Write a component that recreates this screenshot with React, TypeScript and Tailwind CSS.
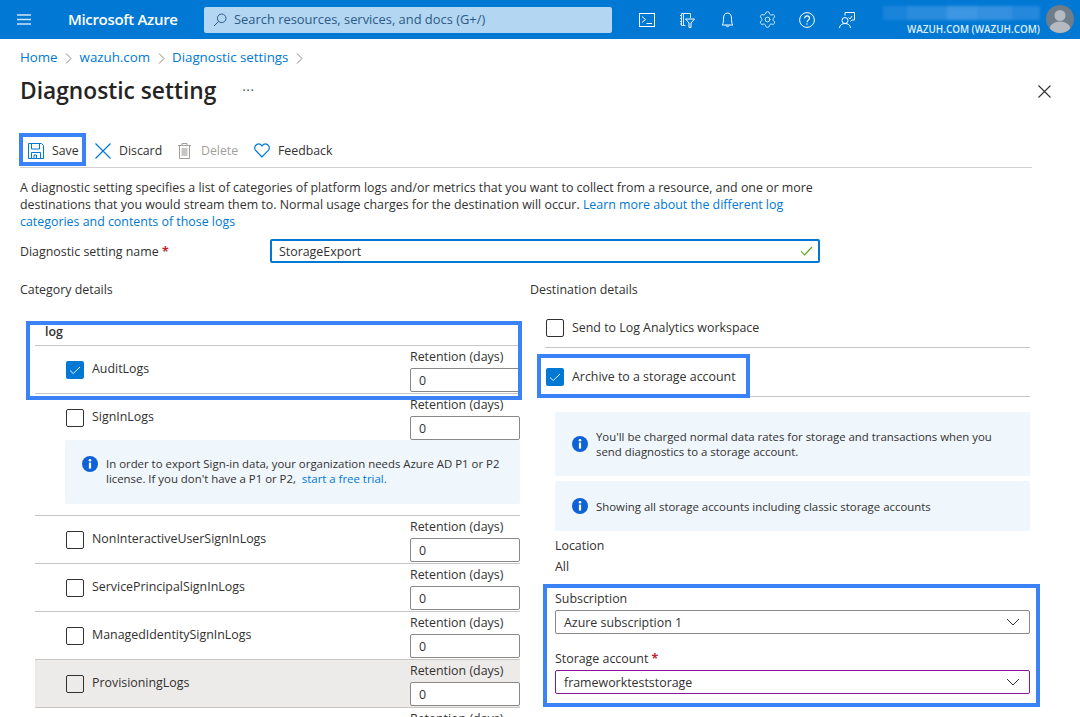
import React from "react";
import { Settings } from "lucide-react";

const Info = () => (
  <svg width="16" height="16" viewBox="0 0 16 16" className="shrink-0">
    <circle cx="8" cy="8" r="8" fill="#0f62d6" />
    <circle cx="8" cy="4.3" r="1.3" fill="#fff" />
    <rect x="6.9" y="6.6" width="2.2" height="6" fill="#fff" />
  </svg>
);

const Chevron = () => (
  <svg width="14" height="8" viewBox="0 0 14 8" fill="none" stroke="#323130" strokeWidth="1">
    <path d="M1 1l6 6 6-6" />
  </svg>
);

const Crumb = () => (
  <svg width="7" height="11" viewBox="0 0 7 11" fill="none" stroke="#8a8886" className="mx-[7.5px]">
    <path d="M1 .5l5 5-5 5" />
  </svg>
);

const Box = ({ on }: { on?: boolean }) =>
  on ? (
    <span className="w-[18px] h-[18px] rounded-[2px] bg-[#0078d4] flex items-center justify-center shrink-0">
      <svg width="12" height="12" viewBox="0 0 12 12" fill="none" stroke="#fff" strokeWidth="0.9">
        <path d="M1 6.5l3.2 3L11 3" />
      </svg>
    </span>
  ) : (
    <span className="w-[18px] h-[18px] rounded-[2px] border border-[#323130] shrink-0" />
  );

const Row = ({ name, on, grey, children }: { name: string; on?: boolean; grey?: boolean; children?: React.ReactNode }) => (
  <div className={`border-b border-[#c8c6c4] ${grey ? "bg-[#edebe9]" : ""}`}>
    <div className="h-[47px] flex">
      <div className="flex-1 flex items-center gap-2 pl-[31px]">
        <Box on={on} />
        <span>{name}</span>
      </div>
      <div className="w-[110px] pt-[1px]">
        <div className="h-[21px] leading-[20px] whitespace-nowrap">Retention (days)</div>
        <div className="h-[24px] border border-[#8a8886] rounded-[2px] bg-white pl-[8px] leading-[23px]">0</div>
      </div>
    </div>
    {children}
  </div>
);

const Blurb = ({ h, children }: { h: string; children: React.ReactNode }) => (
  <div className={`${h} bg-[#eff6fc] rounded-[2px] flex items-center pl-[17px] pr-[24px] gap-[8px] text-[11.4px]`}>
    <Info />
    <div className="leading-[15px]">{children}</div>
  </div>
);

const Select = ({ value, purple }: { value: string; purple?: boolean }) => (
  <div className={`h-[24px] rounded-[2px] border flex items-center justify-between pl-[8px] pr-[9px] ${purple ? "border-[#881798]" : "border-[#8a8886]"}`}>
    <span className="pt-[2px]">{value}</span>
    <Chevron />
  </div>
);

const Outline = ({ c }: { c: string }) => <div className={`absolute border-4 border-[#3b82f6] pointer-events-none ${c}`} />;

const Cell = ({ children }: { children: React.ReactNode }) => (
  <div className="w-[40px] h-[39px] flex items-center justify-center">{children}</div>
);

export default function App() {
  return (
    <div className="relative w-[1080px] h-[717px] overflow-hidden bg-white text-[#323130] text-[12.4px] font-['Open_Sans','Noto_Sans',sans-serif]">
      {/* top bar */}
      <header className="h-[39px] bg-[#0078d4] flex items-center text-white">
        <svg width="14" height="11" viewBox="0 0 14 11" className="ml-[17px]" stroke="#cfe4f6" strokeWidth="1.3">
          <path d="M0 1h14M0 5.5h14M0 10h14" />
        </svg>
        <div className="ml-[37px] w-[136px] text-[15px] font-semibold whitespace-nowrap tracking-[-0.33px]">Microsoft Azure</div>
        <div className="w-[408px] h-[26px] rounded-[2px] bg-[#b3d6f2] flex items-center pl-[9px] text-[#2c5a85] text-[12.9px]">
          <svg width="14" height="14" viewBox="0 0 14 14" fill="none" stroke="#2c5a85" strokeWidth="1">
            <circle cx="8.7" cy="5.3" r="4.3" />
            <path d="M5.5 8.5L1 13" />
          </svg>
          <span className="ml-[7px] whitespace-nowrap">Search resources, services, and docs (G+/)</span>
        </div>
        <div className="ml-[15px] flex items-center">
          <Cell>
            <svg width="16" height="14" viewBox="0 0 16 14" fill="none" stroke="#fff" strokeWidth="1"><rect x=".5" y=".5" width="15" height="13" /><path d="M3 3.500l3.500 3L3 9.500M7.500 10.500h5.500" /></svg>
          </Cell>
          <Cell>
            <svg width="16" height="16" viewBox="0 0 16 16" fill="none" stroke="#d9ecfb" strokeWidth="1"><path d="M2.500 1.500v12h4M2.500 1.500h9v4.500M4.500 1.500v12M1 3.500h2M1 6.500h2M1 9.500h2M1 12h2" /><path d="M6.500 7h9l-3.500 4v4.500h-2V11z" stroke="#fff" /></svg>
          </Cell>
          <Cell>
            <svg width="13" height="16" viewBox="0 0 13 16" fill="none" stroke="#fff" strokeWidth="1"><path d="M1 13c1-1 1.500-2 1.500-7C2.500 3 4.200 1 6.500 1s4 2 4 5c0 5 .5 6 1.500 7zM5 13.500c.2 1.600 2.800 1.600 3 0" /></svg>
          </Cell>
          <Cell>
            <Settings size={19} strokeWidth={1.2} color="#dceefb" />
          </Cell>
          <Cell>
            <svg width="16" height="16" viewBox="0 0 16 16" fill="none" stroke="#fff" strokeWidth="1"><circle cx="8" cy="8" r="7.400" /><path d="M5.700 6.200c0-3 4.800-3 4.800 0 0 2-2.400 1.900-2.400 4" strokeWidth="1.200" /><circle cx="8" cy="12" r=".7" fill="#fff" stroke="none" /></svg>
          </Cell>
          <Cell>
            <svg width="16" height="16" viewBox="0 0 16 16" fill="none" stroke="#fff" strokeWidth="1"><circle cx="6" cy="8.500" r="3" /><path d="M.5 16c0-6 11-6 11 0M6 3.500V.5h9.500v7.500H13l-1.500 1.500M9.500 5.500l1.500 1.500 2-3" /></svg>
          </Cell>
        </div>
        <div className="ml-auto relative w-[157px] h-[39px] mr-[40px]">
          <div className="absolute left-0 right-0 top-[6px] h-[14px] flex blur-[1.5px]">
            <div className="w-[24px] bg-[#1a84db]" />
            <div className="w-[40px] bg-[#2a8cdd]" />
            <div className="w-[30px] bg-[#3e97e2]" />
            <div className="w-[35px] bg-[#3591e0]" />
            <div className="w-[28px] bg-[#2488dc]" />
          </div>
          <div className="absolute right-0 top-[22px] text-[9.900px] leading-[14px] font-semibold whitespace-nowrap text-[#dceefb]">WAZUH.COM (WAZUH.COM)</div>
        </div>
        <svg width="28" height="28" viewBox="0 0 28 28" className="absolute left-[1046px] top-[5px]">
          <clipPath id="av"><circle cx="14" cy="14" r="14" /></clipPath>
          <g clipPath="url(#av)">
            <rect width="28" height="28" fill="#6f7d8a" />
            <circle cx="14" cy="10.500" r="5.500" fill="#b4bac0" />
            <ellipse cx="14" cy="24" rx="10.500" ry="7.500" fill="#b4bac0" />
          </g>
        </svg>
      </header>

      {/* breadcrumb */}
      <nav className="h-[38px] pl-[20px] flex items-center text-[13.300px] text-[#0078d4]">
        <span>Home</span>
        <Crumb />
        <span>wazuh.com</span>
        <Crumb />
        <span>Diagnostic settings</span>
        <Crumb />
      </nav>

      {/* title */}
      <div className="h-[28px] pl-[20px] pr-[29px] flex items-center">
        <h1 className="text-[22.750px] font-semibold text-[#252423] whitespace-nowrap">Diagnostic setting</h1>
        <span className="ml-[26px] text-[12px] -mt-[1px] tracking-[1px]">···</span>
        <svg width="13" height="13" viewBox="0 0 13 13" className="ml-auto" fill="none" stroke="#323130" strokeWidth="1.100"><path d="M.5.500l12 12M12.500.500l-12 12" /></svg>
      </div>

      {/* toolbar */}
      <div className="mt-[29px] ml-[20px] w-[1012px] h-[34px] border-b border-[#d2d0ce] pt-[2px] flex items-center text-[12.300px]">
        <div className="flex items-center pl-[8px] gap-[8px] w-[75px]">
          <svg width="16" height="16" viewBox="0 0 16 16" fill="none" stroke="#0078d4" strokeWidth="1" className="-mt-[2px]"><path d="M.5.500h13l2 2v13H.5zM3.500 1v5h8V1M3.500 15V9.500h9V15M6 15v-3h2.500v3" /></svg>
          <span>Save</span>
        </div>
        <div className="flex items-center gap-[8px] w-[83px]">
          <svg width="16" height="16" viewBox="0 0 16 16" fill="none" stroke="#0078d4" strokeWidth="1.200" className="-mt-[2px]"><path d="M.5.500l15 15M15.500.500l-15 15" /></svg>
          <span>Discard</span>
        </div>
        <div className="flex items-center gap-[10px] w-[76px] text-[#a19f9d]">
          <svg width="13" height="16" viewBox="0 0 13 16" fill="none" stroke="#a19f9d" strokeWidth="1" className="-mt-[2px]"><path d="M0 2.500h13M4 2.500V.500h5v2M1.500 2.500v13h10v-13" /><rect x="3.500" y="5" width="6" height="8" fill="#c8c6c4" stroke="none" /></svg>
          <span>Delete</span>
        </div>
        <div className="flex items-center gap-[8px]">
          <svg width="16" height="15" viewBox="0 0 16 15" fill="none" stroke="#0078d4" strokeWidth="1.200" className="-mt-[2px]"><path d="M8 14L1.200 6.800C-.5 3.500 2.500.8 4.500.8 6 .8 7.200 1.700 8 3c.8-1.300 2-2.200 3.500-2.200 2 0 5 2.700 3.300 6z" /></svg>
          <span>Feedback</span>
        </div>
      </div>

      {/* description */}
      <p className="mt-[11px] ml-[20px] w-[810px] leading-[17px]">
        A diagnostic setting specifies a list of categories of platform logs and/or metrics that you want to collect from a resource, and one or more destinations that you would stream them to. Normal usage charges for the destination will occur.{" "}
        <span className="text-[#0078d4]">Learn more about the different log categories and contents of those logs</span>
      </p>

      {/* name */}
      <div className="mt-[9px] ml-[20px] flex items-center h-[24px]">
        <div className="w-[250px] pt-[2px]">Diagnostic setting name <span className="text-[#c4262e] font-bold">*</span></div>
        <div className="w-[550px] h-[24px] border-2 border-[#0078d4] rounded-[2px] flex items-center justify-between pl-[7px] pr-[5px]">
          <span className="pt-[2px]">StorageExport</span>
          <svg width="13" height="10" viewBox="0 0 13 10" fill="none" stroke="#57a300" strokeWidth="1.100"><path d="M1 5l3.500 4L12 1" /></svg>
        </div>
      </div>

      {/* columns */}
      <div className="mt-[18px] ml-[20px] grid grid-cols-[510px_500px]">
        <div>
          <div className="h-[18px] leading-[18px]">Category details</div>
          <div className="ml-[15px] mt-[32px] w-[485px]">
            <div className="h-[9px] pl-[10px] leading-[2px] font-semibold">log</div>
            <div className="border-t border-[#c8c6c4] mt-[5px]" />
            <Row name="AuditLogs" on />
            <Row name="SignInLogs">
              <div className="ml-[30px] -mt-[1px] h-[64px] mb-[11px] bg-[#eff6fc] rounded-[2px] flex items-start pl-[17px] pt-[16px] gap-[8px] text-[11.400px]">
                <Info />
                <div className="leading-[15px] w-[410px]">
                  In order to export Sign-in data, your organization needs Azure AD P1 or P2 license. If you don't have a P1 or P2,&nbsp; <span className="text-[#0078d4]">start a free trial.</span>
                </div>
              </div>
            </Row>
            <Row name="NonInteractiveUserSignInLogs" />
            <Row name="ServicePrincipalSignInLogs" />
            <Row name="ManagedIdentitySignInLogs" />
            <Row name="ProvisioningLogs" grey />
            <Row name="ADFSSignInLogs" />
          </div>
        </div>
        <div>
          <div className="h-[18px] leading-[18px]">Destination details</div>
          <div className="ml-[15px] mt-[10px]">
            <div className="h-[39px] border-b border-[#c8c6c4] flex items-center gap-[8px] pl-[1px]">
              <Box /> <span>Send to Log Analytics workspace</span>
            </div>
            <div className="h-[49px] pt-[10px] border-b border-[#c8c6c4] flex items-center gap-[8px] pl-[1px]">
              <Box on /> <span>Archive to a storage account</span>
            </div>
            <div className="ml-[10px]">
              <div className="mt-[15px]"><Blurb h="h-[64px]">You'll be charged normal data rates for storage and transactions when you send diagnostics to a storage account.</Blurb></div>
              <div className="mt-[5px]"><Blurb h="h-[50px]">Showing all storage accounts including classic storage accounts</Blurb></div>
              <div className="mt-[6px] h-[17px] leading-[17px]">Location</div>
              <div className="mt-[4px] h-[17px] leading-[17px]">All</div>
              <div className="mt-[15px] h-[17px] leading-[17px]">Subscription</div>
              <div className="mt-[3px]"><Select value="Azure subscription 1" /></div>
              <div className="mt-[16px] h-[17px] leading-[17px]">Storage account <span className="text-[#c4262e] font-bold">*</span></div>
              <div className="mt-[3px]"><Select value="frameworkteststorage" purple /></div>
            </div>
          </div>
        </div>
      </div>

      {/* annotation outlines */}
      <Outline c="left-[19px] top-[133px] w-[67px] h-[33px]" />
      <Outline c="left-[26px] top-[321px] w-[496px] h-[79px]" />
      <Outline c="left-[537px] top-[354px] w-[213px] h-[44px]" />
      <Outline c="left-[543px] top-[584px] w-[497px] h-[123px]" />
    </div>
  );
}
